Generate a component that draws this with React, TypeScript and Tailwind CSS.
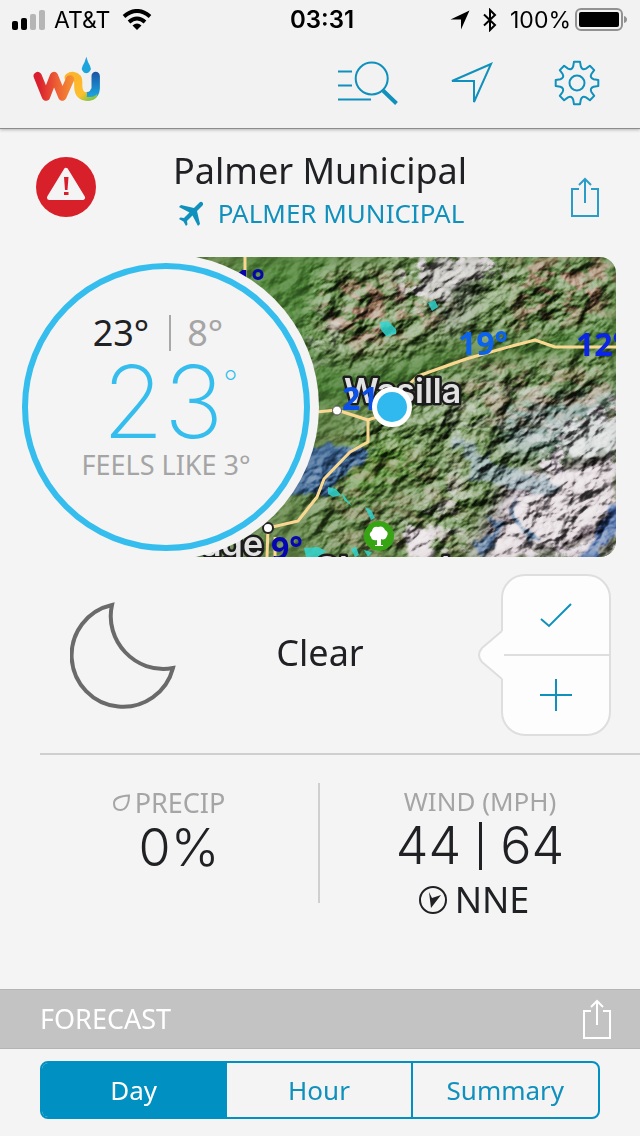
import { useState } from 'react'
import { MdFlight } from 'react-icons/md'

const tabs = ['Day', 'Hour', 'Summary']

// eight rounded teeth around the hub
function gearPath(cx: number, cy: number) {
  const at = (deg: number, r: number) => {
    const a = ((deg - 90) * Math.PI) / 180
    return `${(cx + r * Math.cos(a)).toFixed(1)} ${(cy + r * Math.sin(a)).toFixed(1)}`
  }
  let d = ''
  for (let i = 0; i < 8; i++) {
    const t = i * 45
    d += `${i === 0 ? 'M' : 'L'}${at(t - 8, 21.5)} L${at(t + 8, 21.5)} L${at(t + 13, 17)} Q${at(t + 22.5, 13.5)} ${at(t + 32, 17)} `
  }
  return d + 'Z'
}

function ShareIcon() {
  return (
    <svg width="30" height="42" viewBox="0 0 30 42" fill="none" stroke="currentColor" strokeWidth="2">
      <path d="M9 13H2v27h26V13h-7M15 27V3M9 9l6-6 6 6" />
    </svg>
  )
}

function StatusBar() {
  return (
    <div className="grid h-10 grid-cols-3 items-center px-3 font-['Inter',sans-serif] text-[23px] leading-10 text-black">
      <div className="flex items-center gap-2">
        <svg width="34" height="20" viewBox="0 0 34 20">
          <rect x="0" y="11" width="6" height="9" rx="2" />
          <rect x="9" y="8" width="6" height="12" rx="2" />
          <rect x="18" y="4" width="6" height="16" rx="2" fill="#b5b5b5" />
          <rect x="27" y="0" width="6" height="20" rx="2" fill="#b5b5b5" />
        </svg>
        <span>AT&amp;T</span>
        <svg className="ml-1" width="30" height="22" viewBox="0 0 30 22" fill="none" stroke="#000" strokeWidth="4">
          <path d="M2 7.500Q15 -3.500 28 7.500" />
          <path d="M7 13Q15 6 23 13" />
          <path d="M10.500 16.500Q15 12.500 19.500 16.500L15 21Z" fill="#000" stroke="none" />
        </svg>
      </div>
      <div className="pl-1 text-center text-2xl leading-10 font-semibold">03:31</div>
      <div className="flex items-center justify-end gap-2">
        <svg width="20" height="20" viewBox="0 0 20 20">
          <path d="M19.500 0.500L11 19.500V9.500H0.500Z" />
        </svg>
        <svg className="mx-1" width="16" height="24" viewBox="0 0 16 24" fill="none" stroke="#000" strokeWidth="2">
          <path d="M2 6.500L13 17L8 22V2L13 7L2 17.500" />
        </svg>
        <span>100%</span>
        <svg className="-ml-1" width="53" height="24" viewBox="0 0 53 24">
          <rect x="1" y="1" width="46" height="21" rx="5" fill="none" stroke="#919191" strokeWidth="2" />
          <rect x="4" y="4" width="40" height="15" rx="2" />
          <path d="M49 8Q52 9 52 11.500T49 15Z" fill="#919191" />
        </svg>
      </div>
    </div>
  )
}

function Logo() {
  return (
    <svg width="68" height="46" viewBox="100 168 204 138" fill="none" strokeWidth="25" strokeLinecap="round" strokeLinejoin="round">
      <defs>
        <linearGradient id="logoWarm" gradientUnits="userSpaceOnUse" x1="104" y1="0" x2="222" y2="0">
          <stop offset="0.1" stopColor="#d91e2e" />
          <stop offset="0.6" stopColor="#ee6335" />
          <stop offset="1" stopColor="#f59331" />
        </linearGradient>
        <linearGradient id="logoSun" gradientUnits="userSpaceOnUse" x1="215" y1="225" x2="270" y2="300">
          <stop offset="0.2" stopColor="#fdb52b" />
          <stop offset="0.7" stopColor="#fdc02c" />
          <stop offset="1" stopColor="#8cc442" />
        </linearGradient>
        <linearGradient id="logoCool" gradientUnits="userSpaceOnUse" x1="0" y1="216" x2="0" y2="290">
          <stop offset="0" stopColor="#1b55a5" />
          <stop offset="1" stopColor="#1aa6df" />
        </linearGradient>
      </defs>
      <path d="M288 228V266Q286 289 262 289" stroke="url(#logoCool)" />
      <path d="M207 232Q214 227 221 228Q236 231 236 248V260Q237 289 262 290Q274 290 280 285" stroke="url(#logoSun)" />
      <path d="M288 228V264Q286 282 262 280" stroke="url(#logoCool)" strokeWidth="22" strokeLinecap="butt" />
      <path d="M114 228L139 290L163 228L188 290L211 238" stroke="url(#logoWarm)" />
      <path d="M249 215V260Q249 276 262 276Q274 276 274 260V215Z" fill="#f0f0f0" />
      <path d="M260 170Q264 186 271 197Q276 206 271 213Q266 220 260 220Q253 220 249 213Q244 206 249 197Q256 186 260 170Z" fill="#1ba5dc" />
    </svg>
  )
}

function Header() {
  return (
    <header className="border-b border-[#8c8c8c] bg-[#f2f2f2] shadow-[0_1px_3px_rgba(0,0,0,0.25)]">
      <StatusBar />
      <div className="flex h-[88px] items-center justify-between pr-[11px] pb-[3px] pl-[33px]">
        <a href="#home" aria-label="WU" className="-mt-2">
          <Logo />
        </a>
        <nav className="flex text-[#1090bc]">
          <button aria-label="Search" className="flex w-[104px] justify-center">
            <svg width="64" height="50" viewBox="337 58 64 50" fill="none" stroke="currentColor" strokeWidth="2">
              <circle cx="371.700" cy="78.500" r="16" />
              <path d="M338 71.500H352M338 85.500H352M338 99.500H371" />
              <path d="M383 90.500L396.500 103.500" strokeWidth="4" />
            </svg>
          </button>
          <button aria-label="Locate" className="flex w-[104px] justify-center">
            <svg width="48" height="50" viewBox="449 58 48 50" fill="none" stroke="currentColor" strokeWidth="2">
              <path d="M491 64L452 81H474V102Z" />
            </svg>
          </button>
          <button aria-label="Settings" className="flex w-[104px] justify-center">
            <svg width="50" height="50" viewBox="552 58 50 50" fill="none" stroke="currentColor" strokeWidth="2" strokeLinejoin="round">
              <path d={gearPath(577, 83)} />
              <circle cx="577" cy="83" r="7.500" />
            </svg>
          </button>
        </nav>
      </div>
    </header>
  )
}

function TerrainMap() {
  return (
    <svg className="h-[300px] w-full rounded-r-2xl" viewBox="0 0 450 300" preserveAspectRatio="xMinYMid slice">
      <defs>
        <filter id="soft" x="-30%" y="-30%" width="160%" height="160%">
          <feGaussianBlur stdDeviation="9" />
        </filter>
        <filter id="rough" x="-20%" y="-20%" width="140%" height="140%" colorInterpolationFilters="sRGB">
          <feTurbulence type="fractalNoise" baseFrequency="0.06" numOctaves="4" seed="8" result="n" />
          <feDisplacementMap in="SourceGraphic" in2="n" scale="26" xChannelSelector="R" yChannelSelector="G" />
          <feGaussianBlur stdDeviation="1" />
        </filter>
        <filter id="relief" x="0" y="0" width="100%" height="100%" colorInterpolationFilters="sRGB">
          <feTurbulence type="fractalNoise" baseFrequency="0.035 0.05" numOctaves="5" seed="11" result="n" />
          <feDiffuseLighting in="n" surfaceScale="9" diffuseConstant="0.800" lightingColor="#ffffff">
            <feDistantLight azimuth="265" elevation="42" />
          </feDiffuseLighting>
        </filter>
        <filter id="snowNoise" x="0" y="0" width="100%" height="100%" colorInterpolationFilters="sRGB">
          <feTurbulence type="fractalNoise" baseFrequency="0.05 0.07" numOctaves="5" seed="4" />
          <feColorMatrix values="0 0 0 0 0.86  0 0 0 0 0.82  0 0 0 0 0.85  9 0 0 0 -4.400" />
        </filter>
        <filter id="brownNoise" x="0" y="0" width="100%" height="100%" colorInterpolationFilters="sRGB">
          <feTurbulence type="fractalNoise" baseFrequency="0.05 0.08" numOctaves="5" seed="21" />
          <feColorMatrix values="0 0 0 0 0.62  0 0 0 0 0.49  0 0 0 0 0.39  0 7 0 0 -3.200" />
        </filter>
        <mask id="ranges">
          <g filter="url(#soft)" fill="#fff">
            <rect width="450" height="300" fill="#555" />
            <path d="M150 15L240 0H450V70L360 80L300 75L200 110L145 90Z" />
            <path d="M265 120L450 95V300H190L255 235L180 180L230 145Z" />
            <path d="M140 215L210 190L260 240L220 300H150Z" fill="#ccc" />
          </g>
        </mask>
        <mask id="snowfields">
          <g filter="url(#soft)" fill="#fff">
            <path d="M240 -10H330L350 20L280 35L250 60L230 25Z" />
            <path d="M150 50H180L185 70L135 130L125 110Z" fill="#777" />
            <path d="M395 160L460 130V310H310L350 225Z" />
            <path d="M250 130L400 110L400 180L290 200Z" fill="#555" />
            <path d="M235 270L300 200L300 310H240Z" fill="#aaa" />
          </g>
        </mask>
        <mask id="drylands">
          <g filter="url(#soft)" fill="#fff">
            <path d="M160 20H240L290 60L190 95L150 60Z" />
            <path d="M350 0H450V50L350 80Z" />
            <path d="M290 105L450 110V170L300 170Z" fill="#999" />
            <path d="M160 180L300 200V300H170Z" fill="#666" />
          </g>
        </mask>
      </defs>

      <rect width="450" height="300" fill="#638548" />
      <g filter="url(#soft)">
        <path d="M70 0H170L145 100L200 120L130 170H70Z" fill="#508438" />
        <path d="M130 125L320 85L450 60V100L330 95L220 135L140 150Z" fill="#4b7e36" />
        <path d="M170 190L240 180L250 215L190 240Z" fill="#568a33" />
        <path d="M270 20L320 10L300 70L270 75Z" fill="#75826a" />
        <path d="M330 150L450 130V190L340 200Z" fill="#74918a" />
        <path d="M340 220L450 190V300H300Z" fill="#8f8288" />
      </g>
      <rect width="450" height="300" filter="url(#brownNoise)" mask="url(#drylands)" />
      <rect width="450" height="300" filter="url(#snowNoise)" mask="url(#snowfields)" />

      {/* snow fields and glaciers */}
      <g filter="url(#rough)" fill="#dfd6da">
        <path d="M380 220L445 205L450 255L405 280L350 300H320L345 255Z" />
        <path d="M385 175L420 160L450 165V195L410 200Z" fill="#cfd3d2" />
        <path d="M255 2L310 0L330 15L290 22L275 45L250 30Z" fill="#bfbdb8" />
        <path d="M240 275L262 270L270 300H245Z" />
      </g>

      {/* water */}
      <g filter="url(#rough)">
        <path d="M120 190L196 188L208 194L200 202L178 216L154 240L120 240Z" fill="#3f6793" />
        <path d="M458 235L462 255L424 312H404Z" fill="#4a6aa2" />
        <path d="M280 172L306 192L345 212L378 224L398 230L384 237L345 231L308 218Z" fill="#8ea5b0" opacity="0.800" />
        <path d="M346 239L352 262L370 285L360 280L344 258Z" fill="#54789c" />
        <path d="M328 260L336 263L318 300H306Z" fill="#4b6a90" />
      </g>

      <g mask="url(#ranges)" className="mix-blend-hard-light" opacity="0.550">
        <rect x="-200" y="-300" width="900" height="900" transform="rotate(-35 225 150)" filter="url(#relief)" />
      </g>
      <g mask="url(#ranges)" className="mix-blend-soft-light">
        <rect x="-200" y="-300" width="900" height="900" transform="rotate(-35 225 150)" filter="url(#relief)" />
      </g>

      {/* rain and snow cells */}
      <g fill="#31d6d0" opacity="0.850">
        <path d="M214 65l8-1 8 8v5l-5 1-4 2-6-7z" />
        <path d="M162 230l8 2 5 6-8 2-5-3zM176 236l6 8 4 5-8-6zM199 250l6 3 4 8-4 2zM138 291l14-1 8 4-6 6h-14zM185 292l5-2 3 8-4 2zM198 293l8 2-4 5zM262 46l7-3 3 7-6 4z" />
      </g>

      {/* highways */}
      <g fill="none" stroke="#fbd891" strokeWidth="3" strokeLinejoin="round">
        <path d="M79 0V30M150 155L171 153L202 163L225 155L226 140L232 130H240L252 119L300 102L346 89L369 83L389 90H450" />
        <path d="M202 163V185L184 195L158 222L151 240L132 264L102 271L101 300M109 280V300" />
      </g>
      <circle cx="171" cy="153.500" r="4.500" fill="#fff" stroke="#555" />
      <circle cx="102" cy="271" r="5" fill="#fff" stroke="#222" strokeWidth="2" />

      <g fontFamily="Inter, sans-serif" fontWeight="600" fontSize="34" fill="#e2e2e2" stroke="#1c1c1c" strokeWidth="5" strokeLinejoin="round" paintOrder="stroke">
        <text x="178" y="146">Wasilla</text>
        <text x="97" y="299" textAnchor="end">age</text>
        <text x="148" y="324">Chugach</text>
      </g>

      <g fontFamily="'Noto Sans', sans-serif" fontWeight="700" fontSize="32">
        <text x="67" y="36" fill="#0707a8">1°</text>
        <text x="292" y="98" fill="#0b62ee">19°</text>
        <text x="410" y="99" fill="#0a25e6">12°</text>
        <text x="176" y="153" fill="#0a4fe6">21</text>
        <text x="105" y="303" fill="#0505b4">9°</text>
      </g>

      <circle cx="226" cy="150" r="17.500" fill="#2fb9ee" stroke="#fff" strokeWidth="5" />

      <circle cx="213" cy="279" r="15" fill="#36a413" />
      <path d="M211 288V283Q206 284 205 280Q202 277 206 274Q207 269 212 270Q217 268 219 273Q223 275 221 279Q219 284 215 282V288H217V289H209V288Z" fill="#fff" />
    </svg>
  )
}

function Gauge() {
  return (
    <div className="z-10 -my-[3px] h-[306px] w-[306px] shrink-0 rounded-full bg-[#f4f4f4] p-[9px]">
      <div className="flex h-full flex-col items-center rounded-full border-[6px] border-[#35bdee] pt-10">
        <div className="flex items-center gap-5 pr-4 text-4xl leading-[48px]">
          <span>23°</span>
          <span className="h-9 w-[2px] bg-[#a8a8a8]" />
          <span className="-ml-1 text-[#a5a5a5]">8°</span>
        </div>
        <div className="flex pl-2 font-['Inter',sans-serif] font-extralight text-[#35bdee]">
          <span className="text-[100px] leading-[90px]">23</span>
          <span className="text-[32px] leading-[52px]">°</span>
        </div>
        <div className="text-[27px] leading-9 text-[#a5a5a5]">FEELS LIKE 3°</div>
      </div>
    </div>
  )
}

function Feedback() {
  return (
    <div className="relative w-[110px] rounded-3xl border-2 border-[#dedede] bg-[#fdfdfd] text-[#1090bc]">
      <svg className="absolute top-[54px] -left-[26px]" width="27" height="50" viewBox="0 0 27 50">
        <path d="M27 1H25L5 18Q-1 25 5 32L25 49H27Z" fill="#fdfdfd" />
        <path d="M25 1L5 18Q-1 25 5 32L25 49" fill="none" stroke="#dedede" strokeWidth="2" />
      </svg>
      <button aria-label="Confirm" className="flex h-20 w-full items-center justify-center border-b-2 border-[#dedede]">
        <svg width="32" height="26" viewBox="0 0 32 26" fill="none" stroke="currentColor" strokeWidth="2">
          <path d="M1 17L9 24L31 2" />
        </svg>
      </button>
      <button aria-label="Add report" className="flex h-[78px] w-full items-center justify-center">
        <svg width="32" height="32" viewBox="0 0 32 32" fill="none" stroke="currentColor" strokeWidth="2">
          <path d="M16 0V32M0 16H32" />
        </svg>
      </button>
    </div>
  )
}

export default function App() {
  const [tab, setTab] = useState('Day')

  return (
    <div className="min-h-screen bg-[#f4f4f4] font-['Noto_Sans',sans-serif] text-[#202124]">
      <Header />

      <section className="grid h-32 grid-cols-[80px_1fr_80px] items-center px-6">
        <button aria-label="Severe weather alert" className="mb-3 ml-3">
          <svg width="60" height="60" viewBox="0 0 60 60">
            <circle cx="30" cy="30" r="30" fill="#d8202a" />
            <path d="M30 13.500L46.500 40.500H13.500Z" fill="#f4f4f4" stroke="#f4f4f4" strokeWidth="5" strokeLinejoin="round" />
            <path d="M28 20H32.500L31.500 33H29ZM28 35H32.500V38H28Z" fill="#d8202a" />
          </svg>
        </button>
        <div className="pb-2 text-center">
          <h1 className="text-4xl leading-[48px]">Palmer Municipal</h1>
          <a href="#station" className="flex items-center justify-center gap-2 text-[26px] leading-9 text-[#1090bc]">
            <MdFlight className="rotate-45" size={34} />
            PALMER MUNICIPAL
          </a>
        </div>
        <button aria-label="Share conditions" className="mt-2 mr-4 justify-self-end text-[#2a9cc8]">
          <ShareIcon />
        </button>
      </section>

      <section className="flex items-center pr-6 pl-[13px]">
        <Gauge />
        <div className="-ml-[153px] flex-1">
          <TerrainMap />
        </div>
      </section>

      <section className="ml-10 grid grid-cols-3 items-center border-b-2 border-[#cfcfcf] pt-[17px] pr-10 pb-[17px]">
        <svg className="ml-[30px]" width="108" height="110" viewBox="70 600 108 110" fill="none" stroke="#6a6a6a" strokeWidth="4">
          <path d="M112 605A51.500 51.500 0 1 0 173 668C135 675 104 640 112 605Z" />
        </svg>
        <p className="pb-1 text-center text-4xl">Clear</p>
        <div className="-mr-[11px] justify-self-end">
          <Feedback />
        </div>
      </section>

      <section className="grid h-[234px] grid-cols-2 pt-7">
        <div className="h-[120px] border-r-2 border-[#cfcfcf] pt-[2px] pl-10 text-center">
          <h2 className="flex items-center justify-center gap-1 pr-5 text-[27px] leading-9 text-[#a5a5a5]">
            <svg width="18" height="18" viewBox="0 0 18 18" fill="none" stroke="currentColor" strokeWidth="2">
              <path d="M16 1.500C16 8 14 16 7.500 16C3 16 1 13 1 9.500C1 3 9 2 16 1.500Z" />
            </svg>
            PRECIP
          </h2>
          <p className="font-['Inter',sans-serif] text-[52px] leading-[54px] font-light">0%</p>
        </div>
        <div className="text-center">
          <h2 className="text-[26px] leading-9 text-[#a5a5a5]">WIND (MPH)</h2>
          <p className="flex items-center justify-center gap-[18px] font-['Inter',sans-serif] text-[52px] leading-[54px] font-light">
            44
            <span className="h-12 w-[3px] bg-[#202124]" />
            64
          </p>
          <p className="flex items-center justify-center gap-2 pr-3 text-4xl leading-[54px]">
            <svg width="28" height="28" viewBox="0 0 28 28">
              <circle cx="14" cy="14" r="13" fill="none" stroke="#202124" strokeWidth="2" />
              <path d="M10 6L13 12L22 9L12 22Z" fill="#202124" />
            </svg>
            NNE
          </p>
        </div>
      </section>

      <section className="flex h-[60px] items-center justify-between border-y border-[#b4b4b4] bg-[#c3c3c3] pr-7 pl-10 text-white">
        <h2 className="text-[27px]">FORECAST</h2>
        <button aria-label="Share forecast">
          <ShareIcon />
        </button>
      </section>

      <div className="px-10 pt-3 pb-[17px]">
        <div role="tablist" className="grid h-[58px] grid-cols-3 divide-x-2 divide-[#0090c1] overflow-hidden rounded-lg border-2 border-[#0090c1] text-[26px]">
          {tabs.map((name) => (
            <button
              key={name}
              role="tab"
              aria-selected={tab === name}
              onClick={() => setTab(name)}
              className={tab === name ? 'bg-[#0090c1] text-white' : 'text-[#1090bc]'}
            >
              {name}
            </button>
          ))}
        </div>
      </div>
    </div>
  )
}
